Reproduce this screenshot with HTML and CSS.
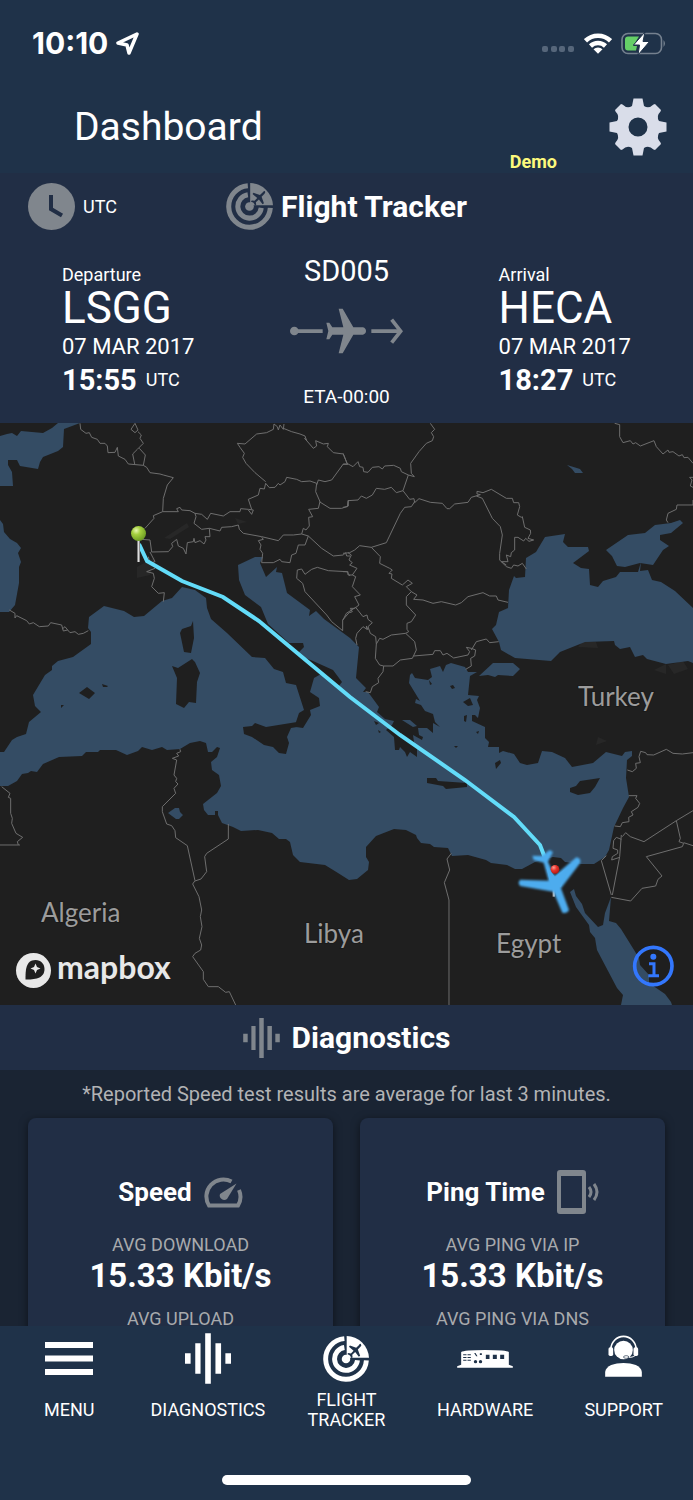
FILE: index.html
```html
<!DOCTYPE html>
<html lang="en">
<head>
<meta charset="utf-8">
<meta name="viewport" content="width=device-width, initial-scale=1">
<title>Dashboard</title>
<link rel="stylesheet" href="styles.css">
</head>
<body>
<svg class="defs" aria-hidden="true">
  <symbol id="radar" viewBox="-70 -70 140 140">
    <path d="M62 4A62 62 0 1 1-5-62M35 4A35 35 0 1 1-5-35" fill="none" stroke="currentColor" stroke-width="15"/>
    <path d="M2-4V-70A70 70 0 0 1 70-4Z" fill="currentColor"/>
    <circle r="13" fill="currentColor"/>
    <path class="radar-plane" d="M45-46Q49-42 44-37L36-29 43-10 39-7 28-21 19-13 20-5 17-2 12-11 4-15 7-18 15-17 23-25 9-37 12-41 31-34 39-42Q43-48 45-46Z"/>
  </symbol>
  <symbol id="bars" viewBox="0 0 139 152">
    <path fill="currentColor" d="M0 60h17v32H0zM31 30h16v92H31zM61 0h17v152H61zM92 30h17v92H92zM122 60h17v32h-17z"/>
  </symbol>
</svg>
<div class="app">
  <header class="top">
    <div class="status">
      <div class="clock-time"><span>10:10</span>
        <svg width="23" height="23" viewBox="0 0 23 23"><path d="M21 2 2 11l9 2 2 8z" fill="none" stroke="#fff" stroke-width="3.500" stroke-linejoin="round"/></svg>
      </div>
      <div class="status-icons">
        <svg width="33" height="20" viewBox="0 0 33 20" fill="#56667a"><rect y="13" width="6" height="6" rx="2"/><rect x="9" y="13" width="6" height="6" rx="2"/><rect x="17" y="13" width="6" height="6" rx="2"/><rect x="26" y="13" width="6" height="6" rx="2"/></svg>
        <svg width="28" height="21" viewBox="0 0 28 21" fill="none" stroke="#fff" stroke-width="4.500"><path d="M1.500 7.800a18 18 0 0 1 25 0M6.500 13a11 11 0 0 1 15 0"/><path d="M9.500 16.300a6.500 6.500 0 0 1 9 0L14 20.800z" fill="#fff" stroke="none"/></svg>
        <svg width="46" height="23" viewBox="0 0 46 23"><rect x="1" y="1.500" width="39.500" height="20" rx="6" fill="none" stroke="#75818f" stroke-width="1.600"/><path d="M42.500 8q3 3.500 0 7z" fill="#75818f"/><path d="M7 4.500h11L12 14h4l-1 4.500H7q-3 0-3-3v-8q0-3 3-3z" fill="#65cf67"/><path d="M24 0 12.500 13h6L17 23 28.500 9.500H22z" fill="#fff" stroke="#1f3249" stroke-width="1"/></svg>
      </div>
    </div>
    <div class="title-row">
      <h1>Dashboard</h1>
      <span class="demo">Demo</span>
      <button class="settings" type="button" aria-label="Settings">
        <svg width="58" height="58" viewBox="-29 -29 58 58"><path fill="#d9dde9" fill-rule="evenodd" d="M-4.500-28.500H4.500L6-21Q11-18 15.500-22.500L17-23 23-17 22.500-15.500Q18-11 21-6L28.500-4.500V4.500L21 6Q18 11 22.500 15.500L23 17 17 23 15.500 22.500Q11 18 6 21L4.500 28.500H-4.500L-6 21Q-11 18-15.500 22.500L-17 23-23 17-22.500 15.500Q-18 11-21 6L-28.500 4.500V-4.500L-21-6Q-18-11-22.500-15.500L-23-17-17-23-15.500-22.500Q-11-18-6-21ZM0-9.500A9.500 9.500 0 1 0 0 9.500 9.500 9.500 0 0 0 0-9.500Z"/></svg>
      </button>
    </div>
  </header>

  <main class="content">
    <section class="tracker">
      <div class="tracker-head">
        <button class="zone" type="button">
          <svg width="47" height="47" viewBox="0 0 47 47"><circle cx="23.500" cy="23.500" r="23.500" fill="#80868d"/><path d="M23 12v14l11 6.500" fill="none" stroke="#212e45" stroke-width="4"/></svg>
          <span>UTC</span>
        </button>
        <h2><svg class="muted" width="47" height="47"><use href="#radar"/></svg>Flight Tracker</h2>
      </div>
      <div class="flight">
        <div class="leg">
          <p class="leg-label">Departure</p>
          <p class="leg-code">LSGG</p>
          <p class="leg-date">07 MAR 2017</p>
          <p class="leg-time"><b>15:55</b> <span>UTC</span></p>
        </div>
        <div class="mid">
          <p class="number">SD005</p>
          <svg class="hop" width="113" height="46" viewBox="0 0 339 138" fill="#80868d"><circle cx="13" cy="69" r="13"/><path d="M20 64h78v11H20zM244 64h88v11h-88z"/><path d="m305 35 27 34.500-27 34.500" fill="none" stroke="#80868d" stroke-width="11"/><path d="M146 2h12l32 56h29q9 3 9 11t-9 11h-29l-32 56h-12l14-56h-33l-9 14h-9l6-25-6-25h9l9 14h33z"/></svg>
          <p class="eta">ETA-00:00</p>
        </div>
        <div class="leg">
          <p class="leg-label">Arrival</p>
          <p class="leg-code">HECA</p>
          <p class="leg-date">07 MAR 2017</p>
          <p class="leg-time"><b>18:27</b> <span>UTC</span></p>
        </div>
      </div>
    </section>

    <div class="map">
      <svg viewBox="0 423 693 582" role="img" aria-label="Flight route from LSGG to HECA">
        <defs>
          <radialGradient id="green" cx=".35" cy=".3" r=".7"><stop offset="0" stop-color="#e6f7b0"/><stop offset=".4" stop-color="#a4cf3e"/><stop offset="1" stop-color="#6f9f24"/></radialGradient>
          <radialGradient id="red" cx=".35" cy=".3" r=".7"><stop offset="0" stop-color="#ff9a90"/><stop offset=".5" stop-color="#e5332a"/><stop offset="1" stop-color="#b81c17"/></radialGradient>
          <linearGradient id="steel"><stop offset="0" stop-color="#555"/><stop offset=".5" stop-color="#ddd"/><stop offset="1" stop-color="#666"/></linearGradient>
          <filter id="soft"><feGaussianBlur stdDeviation="2.500"/></filter>
        </defs>
        <rect y="423" width="693" height="582" fill="#1f1f1f"/>
        <g fill="#272727">
          <path d="M164 538 187 523 189 527 170 539zM137 567 155 557 150 575 137 578zM235 518 247 522 238 524zM578 647 583 641 596 642 598 648zM654 670 666 664 666 674zM668 665 683 661 688 669 674 674zM596 745 598 737 607 741z"/>
        </g>
        <g fill="#344c64">
          <path d="M0 436 7 434 12 433 17 436 21 431 43 433 52 428 58 423H80L64 429 63 447 58 451 43 457 40 462 38 469 20 466 17 460H8V465L12 472 13 486H0zM0 520 3 524 4 532 10 539 17 543 21 548 18 553 21 562 19 567V583L15 605 9 612H0z"/>
          <path d="M0 752 4 752 12 740 17 737 26 734 29 722 41 712 35 706 33 695 45 675 52 670 52 666 58 661 73 657 91 644 91 632 88 628 89 617 104 606 124 611 134 617 144 616 162 601 172 598 182 587 195 590 206 598 207 608 211 619 227 633 252 657 265 658 274 669 283 672 286 683 296 685 304 710 299 713 296 722 296 727 303 728 311 715 310 710 320 706 319 698 310 692 314 678 321 674 338 687 342 682 333 670 313 661 303 657 298 653 304 647 303 643 289 643 268 624 261 607 245 595 239 580 238 565 255 557 263 557 260 563 266 577 277 567 276 572 282 573 287 593 310 610 309 616 316 611 324 619 350 638 359 647 356 678 366 688 363 692 368 692 379 707 377 712 385 719 394 721 392 725 386 730 394 737 395 750 399 750 400 747 405 752 407 757 410 752 417 757 417 747 414 742 413 735 422 740 423 737 419 735 418 728 427 728 433 733 433 723 440 727 435 722 433 714 425 711 421 705 415 703 416 699 420 701 409 683 410 675 412 673 415 678 428 680 432 677 430 669 440 666 443 672 446 665 451 663 465 667 468 672 477 672 470 676 468 695 479 696 477 700 480 708 478 718 475 715 472 715 472 721 485 727 485 738 489 742 488 747 499 747 499 753 503 751 514 754 520 763 527 765 538 763 542 751 552 752 565 758 572 767 593 763 606 752 622 756 625 752 632 751 632 756 627 760 626 778 629 797 623 808 614 827 609 850 605 857 594 864 581 864 565 862 561 858 553 857 535 862 522 869 515 869 507 865 491 863 486 860 468 855 452 856 448 848 434 847 430 844 421 843 417 838 416 835 406 830 394 829 376 836 366 847 366 857 369 862 368 870 357 879 349 880 338 873 325 865 300 862 293 855 290 842 286 839 279 839 272 833 258 830 241 831 233 827 222 823 218 815 218 811 215 811 215 815 208 815 204 810 203 804 217 793 221 786 219 775 212 770 211 762 217 757 220 748 217 747 212 752 208 752 206 743 200 741 190 743 180 749 167 750 162 747 152 750 142 747 138 751 127 755 116 750 100 750 98 752 86 752 82 756 59 757 43 764 37 772 31 771 28 773 22 774 17 781 8 786 0 786z"/>
          <path d="M402 720 410 720 417 726 413 727zM479 676 493 663 513 663 520 669 513 676 498 675 495 677 488 675zM567 465 580 469 583 473 575 473 572 469zM168 813 175 808H179L180 812 183 815 179 819H176z"/>
          <path d="M545 537 565 534 563 542 568 547 588 547 589 551 573 563 581 568 589 569 590 585 598 587 603 581 616 577 620 572 638 572 641 562 640 571 648 570 652 580 661 582 675 591 693 608V663L688 661 666 664 647 659 643 655 635 657 630 647 620 649 615 645 614 641 585 642 560 652 551 661 515 658 501 650 499 642 492 629 496 625 499 612 508 608 509 590 514 576 516 578 525 577 526 558 536 552z"/>
          <path d="M606 550 628 535 645 533 655 525 671 523 680 520 683 523 671 533 660 535 660 540 669 546 663 550 653 565 640 563 625 567 617 566 612 556zM570 892 574 889 576 896 582 904 585 913 598 927 603 925 605 913 611 897 609 921 616 923 621 929 639 958 640 965 649 975V983L665 994 671 1002 672 1005H621L623 995 617 988 597 950 595 938 590 932 589 925 576 907z"/>
        </g>
        <g fill="#1f1f1f">
          <path d="M243 727 252 726 255 723 266 727 297 722 297 727 291 728 287 737 289 743 286 754 279 753 273 747 264 745 252 737 244 734zM193 621 194 638 191 653 184 652 180 633 182 629 191 626zM172 666 178 668 192 659 195 662 200 673 197 682 196 703 189 702 184 708 176 704 177 678zM79 693 87 687 95 693 89 699zM102 684 108 686 107 687 103 687zM61 705 64 705 61 708z"/>
          <path d="M427 778 436 778 438 781 467 783V787L446 789 443 786 427 783zM495 763 500 760 501 763 496 769zM570 788 576 786 580 781 600 778 595 787 590 793 578 795 570 792zM463 702 470 698 473 705 468 706zM464 716 467 715 466 722 464 721zM450 686 453 685 455 688 452 689zM429 680 432 684 430 685zM454 746H458L456 748zM476 732 479 731 478 734zM374 721 379 723 376 725zM378 730 381 732 379 733z"/>
        </g>
        <g fill="none" stroke="#6e6e6e" stroke-width="3" stroke-linejoin="round">
          <path transform="translate(0 420) scale(.33333)" d="M240 10L242 28 258 40 268 38 275 52 292 58 300 70 315 70 322 78 324 98 345 97 352 82 355 108 375 118 385 132 430 136 440 142 450 158 480 162 490 165 520 173 502 195 490 235 488 275 460 287 462 295 435 325M405 10L393 28 405 38 414 30 405 10M414 35L424 45 420 55 430 70 412 88 398 102 404 132M418 85L436 105 430 136M488 275L535 275 530 266 540 262 545 270 570 272 585 280 588 290 582 310 605 328 628 325 630 350 615 350 618 360 612 372 600 362 585 368 582 355 580 365 562 368 558 402 550 385 535 378 530 358 515 370 518 380 505 395 455 396 450 360 425 358M585 280L605 283 622 298 632 280 670 288 690 275 720 275 722 266 745 268 760 270 755 283 745 270M628 325L660 333 665 322 695 320 715 315 718 328 730 340 785 350 835 362 850 345 880 345 905 342 910 325 918 330 928 318 926 292 938 290 926 268 955 265 960 245 947 215 950 190 930 183 905 185 890 178 860 172 855 185 840 195 835 190 825 202 808 203 797 190 793 207 780 205 775 225 745 238 755 268M797 185L765 158 738 130 728 112 733 100 720 82 712 70 735 72 770 42 800 38 820 28 822 12 832 20 835 30 840 15 850 28 852 12M850 25L875 35 900 42 915 48 920 62 914 55 940 85 950 78 947 62 970 72 985 70 982 80 1000 98 1030 102 1042 132 1030 132 995 180 975 185 955 180 950 195M958 245L990 265 1025 265 1045 258V240M785 352L790 358 775 362 783 375 780 388 788 400 785 428H820L840 418 845 425 870 428 875 405 888 400 895 375 915 375 925 348 905 342M925 348L965 385 1000 408 1030 405 1037 398 1040 408 1050 408M1050 468L1040 455 985 452 952 442 935 448 915 463 905 447 892 450 890 475 908 490 915 515 980 585 995 605 1028 632 1028 600 1050 575M450 396L465 425 450 430 445 410M465 445L440 455 460 460 463 475 455 500 475 520 493 518 490 545M28 570L45 580V594L50 587 80 602 88 612 100 608 118 620 145 618 152 608 185 615 190 633 203 630 195 620 187 627M203 630L210 638 225 635 235 643 250 640 265 632"/>
          <path transform="translate(343 420) scale(.33333)" d="M262 10L275 28 265 38 272 50 268 62 250 70 228 95 203 130 205 160 214 170 196 165 180 212 200 238 213 236 215 248 228 236 262 247 298 250 312 266H320L335 252 375 247 385 232 412 224 402 222V214L420 218 445 208 490 235H508L512 248 527 248 530 260 523 285 535 292 538 290 545 322 562 330 563 340 555 355 572 360 558 364 548 355 542 363 525 352 515 352V390L505 398 503 410 490 405 495 425 475 425 490 435M400 228L418 235 448 295 472 320 478 345 470 400V420L490 440 505 445 512 435 525 438 538 430 550 447M0 100L12 130 30 140 45 125 50 140 60 142 62 155 75 157 88 142 108 140 118 147 125 138 152 136 172 145 175 155 196 165M0 133H15M0 262L13 260 15 242 45 240 55 228 70 235 88 225 100 205 125 208 145 202 160 218 180 212M215 245L205 260 185 262 172 280 130 368 85 382 50 377 35 390 20 398 0 400M85 382L112 410 110 430 140 445 148 450 138 460 147 462 145 475 178 495 195 480 208 490 190 500 205 515 222 525 212 538 240 540 270 550 295 545 338 555 355 548 375 530 420 518 440 528 460 528 465 540 495 547M15 398L25 405 18 420 28 428 20 435 42 445 28 465 38 470 28 500 52 525 35 530 48 555 35 565 22 565 28 575 20 578M0 455L15 455V465H28M0 600L10 580 38 562 60 590 72 585 75 598 88 608 75 620 82 640 98 650M75 630L70 618 72 628 60 620 42 640 38 655 42 675M98 650L100 672 97 715 110 735 122 738 120 755 105 775 107 788 88 800 82 818 68 815M100 672L110 655 120 658 145 645 188 640 215 665 220 690 208 715 172 720 150 738 122 738M205 515L190 530V555L218 585 205 605 192 610V628L197 635 188 640M212 708L270 703 275 692 292 692 300 705 312 700 332 714 375 705 380 695 370 682 385 685 398 690 395 708 383 715 385 738 368 748M385 690L400 665 430 657 440 668 467 665M815 10L830 14V50L840 68 862 62 870 72 878 68 892 78 933 62 940 80 960 102 975 90 978 97 990 95 1008 108 1018 104 1023 113 1035 112 1050 130M1050 172L1040 172 1047 180 1042 198 1050 202M1050 240V255H1002L1000 268 975 280 970 300 975 308"/>
          <path transform="translate(0 710) scale(.33333)" d="M5 230L30 250 25 262 32 265 32 310 37 325 35 340 48 370 68 382 52 395 55 405M0 405H60M540 118L542 125 530 130 536 138 517 145 530 150 522 195 530 205 527 215 534 222 522 235 527 250 487 290V305L500 342 515 347 525 362 527 383 562 407 585 512 578 522 597 560 605 600 601 620 606 650 598 685 605 705 602 720 585 730 578 740 610 785V808L625 830 655 830 677 847 688 845 707 885M685 342V387L620 430 614 440 620 485 603 507 585 513"/>
          <path transform="translate(343 710) scale(.33333)" d="M325 430L312 447 320 480 304 518 318 570V885M1050 128L1018 132 990 130 970 118 932 135 912 134 908 128 893 124 888 140 892 158 878 160 880 175 868 185 853 180M857 257L882 257 878 265 890 280 885 292 865 305 870 315 857 322 858 335 838 338 832 350 815 348M790 437L775 452 805 555M835 375L830 440 808 555M835 388L820 382 812 392 810 415 824 420V430L808 440 806 450 830 442M838 380L848 368 862 380 903 395 1000 332 1050 302M1000 332L1012 385 1008 395 1022 400 1018 410 910 440 957 498 945 508 938 528 897 535 863 573 805 562M1022 398L1050 407"/>
        </g>
        <g class="country">
          <text x="578" y="706">Turkey</text>
          <text x="41" y="922">Algeria</text>
          <text x="304" y="943">Libya</text>
          <text x="496" y="953">Egypt</text>
        </g>
        <path d="M139 544 147 561 182 581 223 597 259 621 302 657 350 697 400 735 465 780 514 817 540 845 545 858" fill="none" stroke="#63dcf9" stroke-width="4"/>
        <path d="M137 540h3v22h-3z" fill="url(#steel)"/>
        <circle cx="138.500" cy="533.500" r="7.500" fill="url(#green)"/>
        <g transform="translate(343 710) scale(.33333)">
          <path d="M629 530h7v30h-7z" fill="#bbb"/>
          <path filter="url(#soft)" fill="#4dacee" d="M602 458 572 450 568 437 596 438 620 420 630 426 615 455 634 498 700 442Q716 444 711 460L654 535 678 600Q672 612 658 608L631 545 532 528Q522 518 532 509L617 512Z"/>
          <circle cx="636" cy="478" r="13" fill="url(#red)"/>
          <path d="m610 470 26 30 40-30-22 60h-30z" fill="#4dacee"/>
          <circle cx="931" cy="768" r="56" fill="none" stroke="#3377fd" stroke-width="11"/>
          <circle cx="931" cy="740" r="9" fill="#3377fd"/>
          <path d="M918 761h15v36M916 797h32" fill="none" stroke="#3377fd" stroke-width="9"/>
        </g>
        <g fill="#e8e8e8">
          <circle cx="33.500" cy="970.500" r="17.500"/>
          <path d="M25.500 979.500C25.500 971 25.500 960 35.500 960 41 960 44.500 964 44.500 969 44.500 979 34 979.500 25.500 979.500Z" fill="#1f1f1f"/>
          <path d="m35.500 963.500 1.500 3.500 3.500 1.500-3.500 1.500-1.500 3.500-1.500-3.500-3.500-1.500 3.500-1.500z"/>
          <text class="brand" x="57" y="979">mapbox</text>
        </g>
      </svg>
    </div>

    <section class="diagnostics">
      <h2><svg class="muted" width="37" height="40"><use href="#bars"/></svg>Diagnostics</h2>
      <div class="results">
        <p class="note">*Reported Speed test results are average for last 3 minutes.</p>
        <div class="cards">
          <article class="card">
            <h3>Speed
              <svg width="39" height="31" viewBox="0 0 39 31"><path d="M27.500 4.500A17 17 0 0 0 5 28.500H34A17 17 0 0 0 35 13" fill="none" stroke="#80868d" stroke-width="4"/><path d="M32.500 6.500 23 22a4.500 4.500 0 0 1-7-5z" fill="#80868d"/></svg>
            </h3>
            <p class="metric">AVG DOWNLOAD</p>
            <p class="value">15.33 Kbit/s</p>
            <p class="metric">AVG UPLOAD</p>
          </article>
          <article class="card">
            <h3>Ping Time
              <svg width="42" height="44" viewBox="0 0 42 44"><path fill="#80868d" fill-rule="evenodd" d="M3 0h23q3 0 3 3v38q0 3-3 3H3q-3 0-3-3V3q0-3 3-3zm1 6v32h21V6z"/><path d="M32 17q4 5 0 10M37 14q6 8 0 16" fill="none" stroke="#80868d" stroke-width="3"/></svg>
            </h3>
            <p class="metric">AVG PING VIA IP</p>
            <p class="value">15.33 Kbit/s</p>
            <p class="metric">AVG PING VIA DNS</p>
          </article>
        </div>
      </div>
    </section>
  </main>

  <footer class="bottom">
    <nav class="tabs">
      <a href="#menu"><span class="tab-icon"><svg width="48" height="33" viewBox="0 0 48 33"><path fill="#fff" d="M0 0h48v6H0zM0 13.500h48v6H0zM0 27h48v6H0z"/></svg></span><span class="tab-label">MENU</span></a>
      <a href="#diagnostics"><span class="tab-icon"><svg width="46" height="51"><use href="#bars"/></svg></span><span class="tab-label">DIAGNOSTICS</span></a>
      <a href="#tracker"><span class="tab-icon"><svg width="46" height="46"><use href="#radar"/></svg></span><span class="tab-label">FLIGHT TRACKER</span></a>
      <a href="#hardware"><span class="tab-icon"><svg width="56" height="18" viewBox="0 0 167 54"><path fill="#fff" d="M12 6Q20 0 84 0t71 6v38l12 5v4H0v-4l12-5z"/><g fill="#1f3249"><path d="M18 13h10v3H18zM18 21h10v3H18zM18 29h10v3H18zM31 13h10v3H31zM31 21h10v3H31zM31 29h10v3H31zM51 9h4l6 10h-4zM68 10h6v5h-6zM86 14h11v13H86zM107 14h12v13h-12zM129 14h12v13h-12z"/><circle cx="55" cy="35" r="5"/><circle cx="70" cy="35" r="5"/></g></svg></span><span class="tab-label">HARDWARE</span></a>
      <a href="#support"><span class="tab-icon support"><svg width="37" height="42" viewBox="0 0 110 126"><path d="M17 44a38 40 0 0 1 76 0" fill="none" stroke="#fff" stroke-width="5"/><circle cx="55" cy="45" r="28" fill="#fff"/><rect x="10" y="37" width="14" height="26" rx="5" fill="#fff"/><rect x="85" y="37" width="14" height="26" rx="5" fill="#fff"/><path d="M93 58q-6 10-24 9" fill="none" stroke="#fff" stroke-width="3"/><ellipse cx="63" cy="66" rx="8" ry="4" fill="#fff" stroke="#1f3249" stroke-width="2"/><path d="M0 125v-14C2 92 28 84 55 84s53 8 55 27v14z" fill="#fff"/></svg></span><span class="tab-label">SUPPORT</span></a>
    </nav>
    <div class="home-bar"></div>
  </footer>
</div>
</body>
</html>
```

FILE: styles.css
```css
* { box-sizing: border-box; }
body {
  margin: 0;
  background: #1f3249;
  color: #fff;
  font-family: Roboto, "Liberation Sans", sans-serif;
}
h1, h2, h3, p { margin: 0; }
svg { display: block; flex: none; }
button {
  padding: 0;
  border: 0;
  background: none;
  color: inherit;
  font: inherit;
  cursor: pointer;
}
.defs { position: absolute; width: 0; height: 0; }
.muted { color: #80868d; }

.app {
  display: flex;
  flex-direction: column;
  height: 100vh;
}

/* Header */
.status {
  display: flex;
  align-items: center;
  justify-content: space-between;
  height: 86px;
  padding: 0 26px 0 32px;
}
.clock-time {
  display: flex;
  align-items: center;
  gap: 8px;
  font: 700 30px/32px Inter, sans-serif;
}
.status-icons { display: flex; align-items: center; gap: 9px; }
.title-row {
  display: flex;
  align-items: center;
  height: 87px;
  padding: 0 26px 6px 74px;
}
h1 { flex: 1; font-size: 39px; font-weight: 400; line-height: 44px; }
.demo {
  align-self: flex-end;
  margin: 0 52px -4px 0;
  color: #fcf97c;
  font-size: 18px;
  font-weight: 700;
  line-height: 18px;
}

/* Flight tracker */
.content {
  flex: 1;
  min-height: 0;
  overflow-y: auto;
  scrollbar-width: none;
}
.tracker { background: #212e45; --hole: #212e45; }
.tracker-head {
  display: grid;
  grid-template-columns: 1fr auto 1fr;
  align-items: center;
  height: 66px;
  padding: 0 28px;
}
.zone { display: flex; align-items: center; gap: 8px; font-size: 18px; }
h2 {
  display: flex;
  align-items: center;
  justify-content: center;
  gap: 8px;
  font-size: 30px;
  font-weight: 700;
}
.radar-plane { fill: var(--hole); }
.flight {
  display: grid;
  grid-template-columns: 1fr auto 1fr;
  padding: 14px 62px 2px;
}
.leg { padding-top: 11px; }
.leg:last-child { justify-self: end; }
.leg-label { font-size: 18px; line-height: 22px; }
.leg-code { font-size: 44px; line-height: 44px; }
.leg-date { font-size: 22px; line-height: 34px; }
.leg-time {
  display: flex;
  align-items: center;
  gap: 9px;
  font-size: 18px;
  line-height: 32px;
}
.leg-time b { font-size: 29px; }
.mid { display: flex; flex-direction: column; align-items: center; }
.number { font-size: 29px; line-height: 36px; }
.hop { margin: 19px 0; }
.eta { font-size: 19px; line-height: 48px; }

/* Map */
.map svg { width: 100%; height: auto; }
.country text {
  fill: #9c9c9c;
  stroke: #1a1a1a;
  stroke-width: 2px;
  paint-order: stroke;
  font: 400 26px Lato, sans-serif;
}
.brand { font: 700 32px Lato, sans-serif; }

/* Diagnostics */
.diagnostics { background: #212e45; }
.diagnostics h2 { height: 65px; gap: 12px; }
.results { padding: 12px 28px 0; background: #1a2433; }
.note {
  color: #b2b3b5;
  font-size: 20px;
  line-height: 24px;
  text-align: center;
}
.cards {
  display: grid;
  grid-template-columns: 1fr 1fr;
  gap: 27px;
  padding: 12px 0 28px;
}
.card {
  padding: 50px 0;
  border-radius: 8px;
  background: #212e45;
  box-shadow: 0 2px 8px rgba(0, 0, 0, .5);
  text-align: center;
}
h3 {
  display: flex;
  align-items: center;
  justify-content: center;
  gap: 12px;
  height: 48px;
  margin-bottom: 17px;
  font-size: 26px;
  font-weight: 700;
}
.metric { color: #a8aaad; font-size: 18px; line-height: 24px; }
.value {
  margin-bottom: 12px;
  font-size: 33px;
  font-weight: 700;
  line-height: 38px;
}

/* Bottom navigation */
.bottom { padding-bottom: 15px; background: #1f3249; --hole: #1f3249; }
.tabs { display: grid; grid-template-columns: repeat(5, 1fr); }
.tabs a {
  display: flex;
  flex-direction: column;
  align-items: center;
  color: #fff;
  text-decoration: none;
}
.tab-icon { display: flex; align-items: center; height: 65px; }
.support { padding-bottom: 6px; }
.tab-label {
  display: flex;
  align-items: center;
  width: min-content;
  height: 38px;
  font-size: 18px;
  line-height: 20px;
  text-align: center;
}
.home-bar {
  width: 36%;
  height: 10px;
  margin: 46px auto 0;
  border-radius: 5px;
  background: #fff;
}
```
